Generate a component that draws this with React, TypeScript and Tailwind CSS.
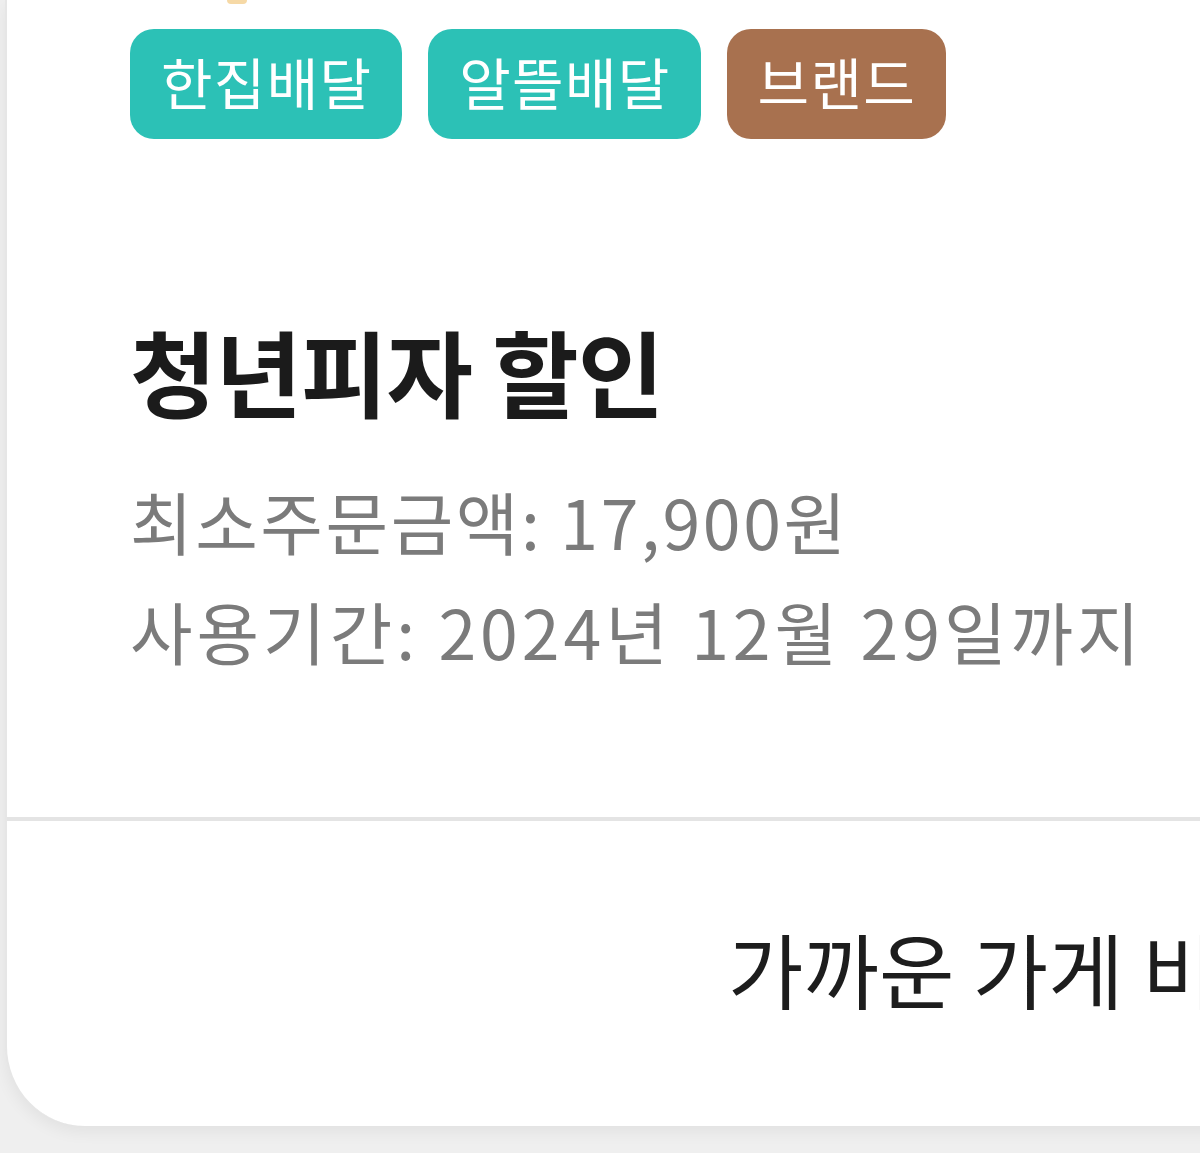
const tags = [
  { label: "한집배달", color: "bg-[#2cc1b6]" },
  { label: "알뜰배달", color: "bg-[#2cc1b6]" },
  { label: "브랜드", color: "bg-[#a8714f]" },
];

export default function App() {
  return (
    <div
      className="w-[1200px] h-[1153px] overflow-hidden bg-[#efefef]"
      style={{ fontFamily: '"Noto Sans CJK KR", "Noto Sans", sans-serif' }}
    >
      <div className="relative ml-[5px] w-[1300px] h-[1126px] bg-white border-l-2 border-[#e6e6e6] rounded-bl-[80px] shadow-[0_6px_16px_rgba(0,0,0,0.06)]">
        {/* sliver of an item cut off above */}
        <div className="absolute left-[220px] top-0 h-[4px] w-[20px] rounded-b-full bg-[#f6d9a6]" />

        <div className="h-[817px] pl-[123px] pt-[29px]">
          <div className="flex gap-[26px]">
            {tags.map((t) => (
              <span
                key={t.label}
                className={`${t.color} flex h-[110px] items-center rounded-[24px] pb-[6px] pl-[31px] pr-[30px] text-[56px] leading-none tracking-[1.3px] text-white`}
              >
                {t.label}
              </span>
            ))}
          </div>

          <h2 className="mt-[184px] text-[94px] font-bold leading-none tracking-[-1px] text-[#1b1b1b]">
            청년피자 할인
          </h2>
          <div className="mt-[70px] flex flex-col gap-[42px] text-[68px] leading-none text-[#7b7b7b]">
            <p className="tracking-[2.6px]">최소주문금액: 17,900원</p>
            <p className="tracking-[4px]">사용기간: 2024년 12월 29일까지</p>
          </div>
        </div>

        <div className="border-t-[4px] border-[#e4e4e4]" />

        <div className="pl-[721px] pt-[106px]">
          <p className="whitespace-nowrap text-[82px] leading-none text-[#1d1d1d]">
            가까운 가게 비교
          </p>
        </div>
      </div>
    </div>
  );
}
